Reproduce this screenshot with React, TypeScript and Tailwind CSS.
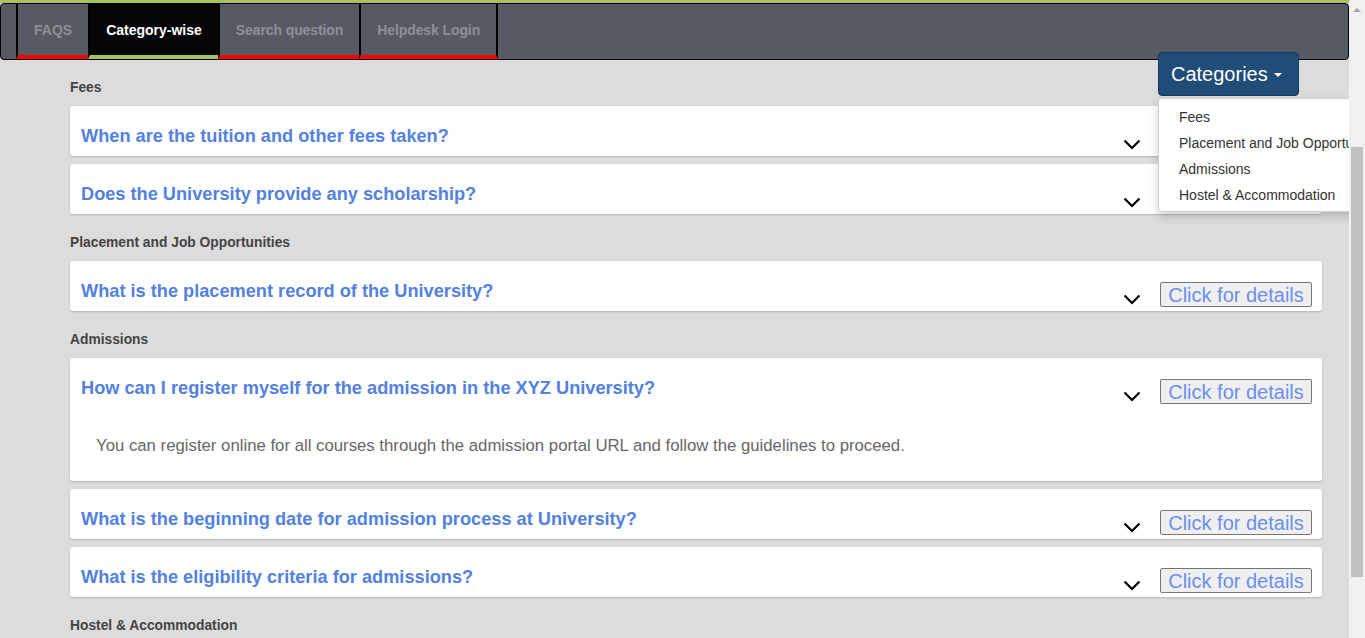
import React from "react";

const font = { fontFamily: '"Liberation Sans", Arial, sans-serif' };

function Chevron() {
  return (
    <svg width="18" height="11" viewBox="0 0 18 11" className="mt-[33px] shrink-0">
      <polyline points="1.5,1.5 9,9 16.5,1.5" fill="none" stroke="#000" strokeWidth="2.2" />
    </svg>
  );
}

function Card({ q, answer }: { q: string; answer?: string }) {
  return (
    <div className="bg-white rounded-[3px] shadow-[0_1px_2px_rgba(0,0,0,0.18)]">
      <div className="h-[50px] flex items-start pl-[11px] pr-[10px]">
        <div className="flex-1 pt-[20px] text-[18.2px] leading-[20px] font-bold text-[#5281df]">{q}</div>
        <Chevron />
        <button
          className="mt-[21px] ml-[19px] h-[25px] w-[152px] bg-[#efefef] border border-[#767676] rounded-[2px] text-[20px] leading-[22px] text-[#6b8ff0] flex items-center justify-center"
          style={font}
        >
          Click for details
        </button>
      </div>
      {answer && (
        <div className="pl-[26px] pt-[29px] pb-[26px] text-[16.75px] leading-[18px] text-[#666]">{answer}</div>
      )}
    </div>
  );
}

function Section({ title, first, children }: { title: string; first?: boolean; children: React.ReactNode }) {
  return (
    <div className={first ? "pt-[19px]" : "pt-[20px]"}>
      <div className="text-[13.8px] leading-[17px] font-bold text-[#444] mb-[10px]">{title}</div>
      <div className="flex flex-col gap-[8px]">{children}</div>
    </div>
  );
}

export default function App() {
  const tabs = [
    { label: "FAQS", active: false },
    { label: "Category-wise", active: true },
    { label: "Search question", active: false },
    { label: "Helpdesk Login", active: false },
  ];
  return (
    <div className="flex h-[638px] w-[1365px] overflow-hidden bg-[#dcdcdc]" style={font}>
      <div className="relative flex-1 h-full overflow-hidden">
        <div className="h-[3px] bg-[#a9c25d]" />
        <div className="h-[57px] bg-[#565b63] border border-black rounded-[4px] flex items-start pl-[15px]">
          {tabs.map((t, i) => (
            <div
              key={t.label}
              className={
                "h-[55px] flex items-center px-[16px] pt-[1px] text-[14px] font-bold border-l-[2px] border-l-black border-b-[4px] " +
                (t.active ? "bg-[#050505] text-white border-b-[#a9c25d]" : "text-[#8c9096] border-b-[#ff0000]") +
                (i === tabs.length - 1 ? " border-r-[2px] border-r-black" : "") +
                (i >= 2 ? " tracking-[-0.1px]" : "")
              }
            >
              {t.label}
            </div>
          ))}
        </div>

        <div className="pl-[70px] pr-[27px]">
          <Section title="Fees" first>
            <Card q="When are the tuition and other fees taken?" />
            <Card q="Does the University provide any scholarship?" />
          </Section>
          <Section title="Placement and Job Opportunities">
            <Card q="What is the placement record of the University?" />
          </Section>
          <Section title="Admissions">
            <Card
              q="How can I register myself for the admission in the XYZ University?"
              answer="You can register online for all courses through the admission portal URL and follow the guidelines to proceed."
            />
            <Card q="What is the beginning date for admission process at University?" />
            <Card q="What is the eligibility criteria for admissions?" />
          </Section>
          <Section title="Hostel & Accommodation">
            <Card q="Where is the hostel located?" />
          </Section>
        </div>

        <button className="absolute top-[52px] left-[1158px] w-[141px] h-[44px] bg-[#1f4d78] border border-[#163a5c] rounded-[4px] text-white text-[20px] flex items-center pl-[12px]">
          Categories
          <span className="ml-[6px] mt-[2px] w-0 h-0 border-l-[4px] border-r-[4px] border-t-[4px] border-l-transparent border-r-transparent border-t-white" />
        </button>
        <div className="absolute top-[98px] left-[1158px] w-[220px] bg-white border border-[#d0d0d0] rounded-[3px] shadow-[0_4px_10px_rgba(0,0,0,0.18)] pt-[5px] pb-[3px]">
          {["Fees", "Placement and Job Opportunities", "Admissions", "Hostel & Accommodation"].map((c) => (
            <div key={c} className="pl-[20px] text-[14px] leading-[26px] text-[#333] whitespace-nowrap">
              {c}
            </div>
          ))}
        </div>
      </div>
      <div className="relative w-[16px] h-full bg-[#f1f1f1]">
        <span className="absolute top-[8px] left-[4px] w-0 h-0 border-l-[4px] border-r-[4px] border-b-[4px] border-l-transparent border-r-transparent border-b-[#a3a3a3]" />
        <div className="absolute top-[147px] left-[2px] w-[12px] h-[430px] bg-[#c1c1c1]" />
      </div>
    </div>
  );
}
